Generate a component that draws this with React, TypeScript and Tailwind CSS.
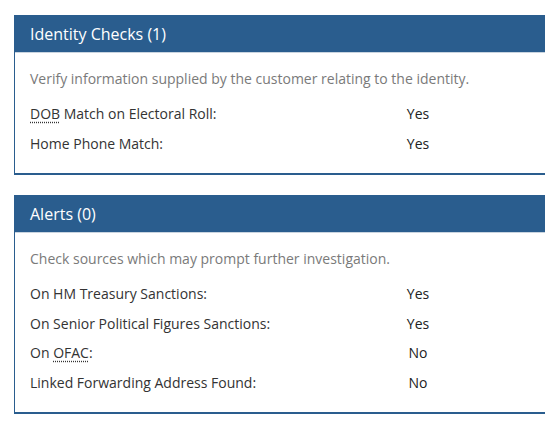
import React from 'react';

type Row = { label: React.ReactNode; value: string };

const identityRows: Row[] = [
    {
        label: (
            <>
                <abbr title="Date of Birth" className="underline decoration-dotted underline-offset-[3px]">DOB</abbr> Match on Electoral Roll:
            </>
        ),
        value: 'Yes',
    },
    { label: 'Home Phone Match:', value: 'Yes' },
];

const alertRows: Row[] = [
    { label: 'On HM Treasury Sanctions:', value: 'Yes' },
    { label: 'On Senior Political Figures Sanctions:', value: 'Yes' },
    {
        label: (
            <>
                On <abbr title="Office of Foreign Assets Control" className="underline decoration-dotted underline-offset-[3px]">OFAC</abbr>:
            </>
        ),
        value: 'No',
    },
    { label: 'Linked Forwarding Address Found:', value: 'No' },
];

const Panel = ({ title, description, rows }: { title: string; description: string; rows: Row[] }) => (
    <div className="w-[560px] border-l border-b-2 border-[#2a5d8e]">
        {/* En-tête */}
        <div className="h-[38px] bg-[#2a5d8e] border-b border-[#c9d4df] px-[15px] pt-[8px] text-[16px] leading-[22px] text-white">
            {title}
        </div>

        {/* Contenu */}
        <div className="px-[15px] pt-[16px] pb-[15px] text-[14px]">
            <p className="leading-[20px] text-[#7a7a7a] mb-[10px]">{description}</p>
            {rows.map((row, i) => (
                <div key={i} className="grid grid-cols-[348px_80px] leading-[29.5px]">
                    <span className="text-[#333]">{row.label}</span>
                    <span className="text-center text-[#222]">{row.value}</span>
                </div>
            ))}
        </div>
    </div>
);

const App = () => {
    return (
        <div className="w-full min-h-screen overflow-hidden bg-white font-['Open_Sans',sans-serif]">
            <div className="pl-[14px] pt-[15px] flex flex-col gap-[20px]">
                <Panel
                    title="Identity Checks (1)"
                    description="Verify information supplied by the customer relating to the identity."
                    rows={identityRows}
                />
                <Panel
                    title="Alerts (0)"
                    description="Check sources which may prompt further investigation."
                    rows={alertRows}
                />
            </div>
        </div>
    );
};

export default App;
